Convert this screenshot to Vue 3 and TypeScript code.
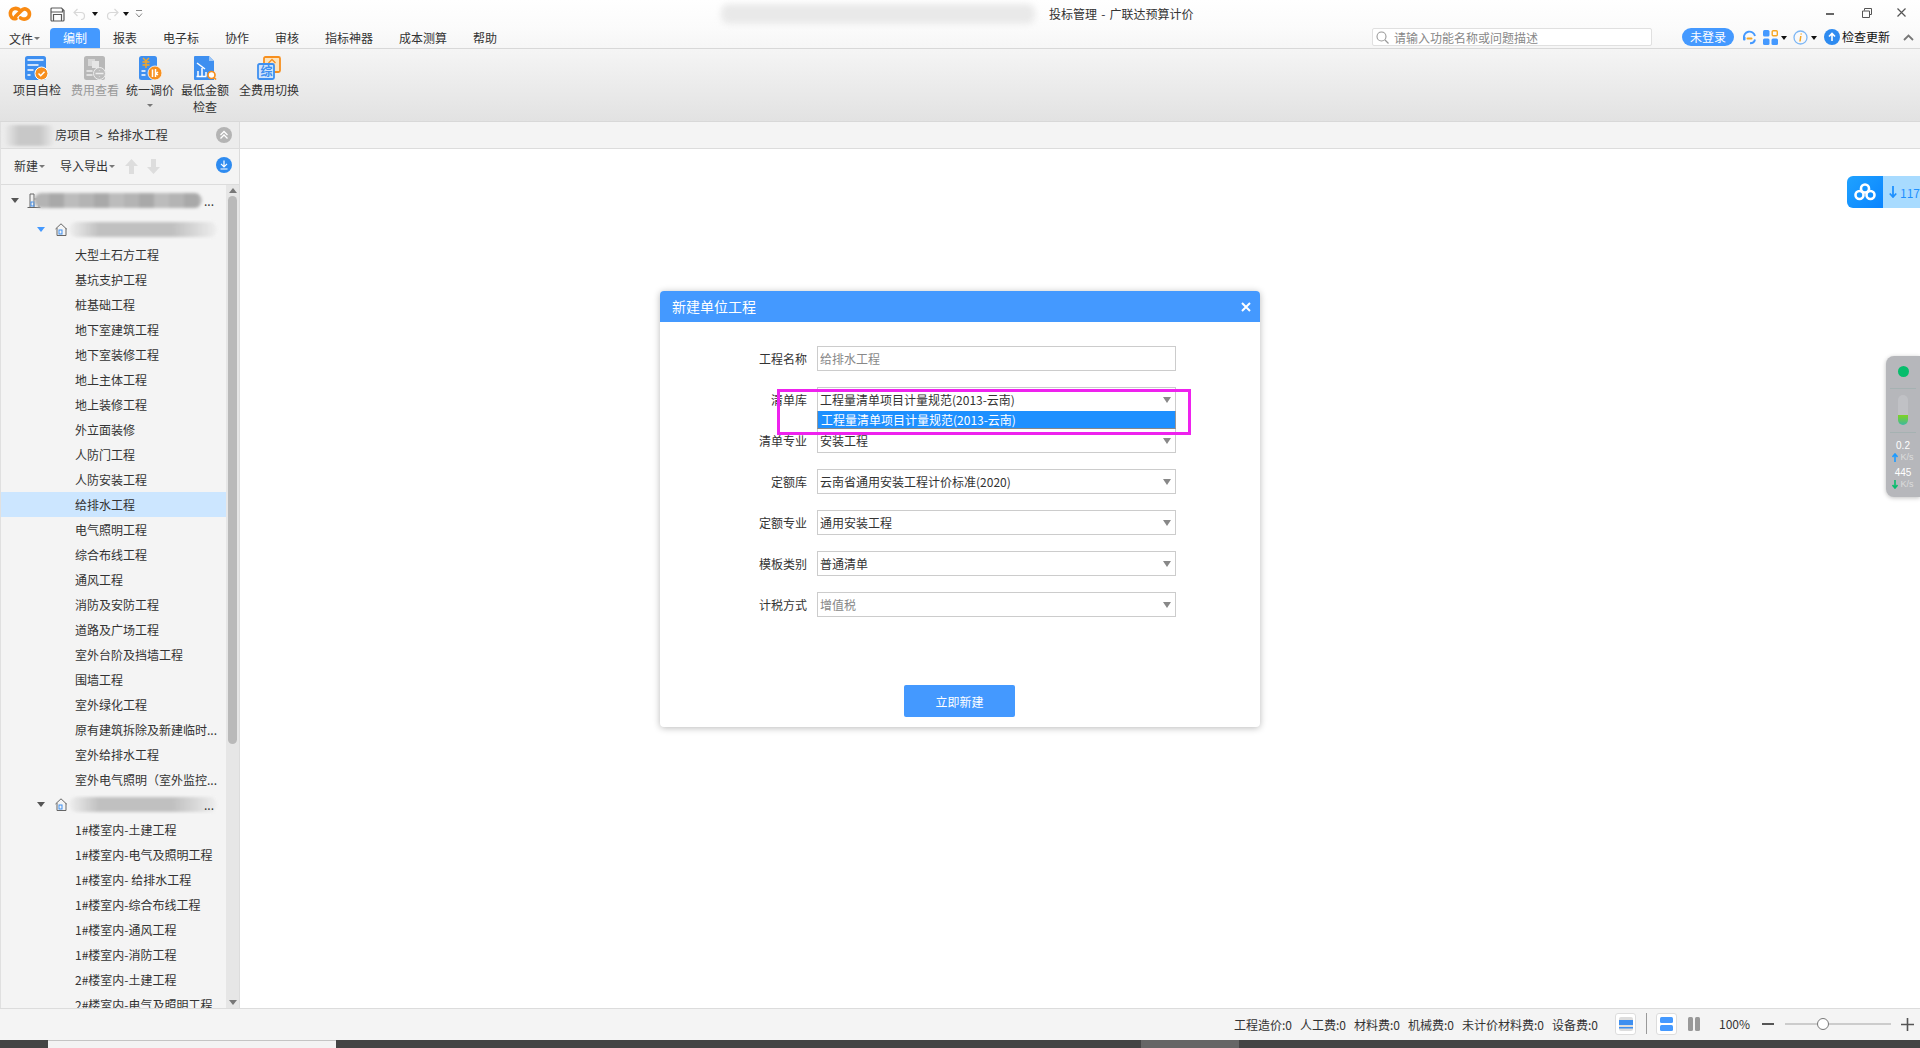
<script setup lang="ts">
interface TreeRow { text: string; kind: 'leaf' | 'group'; selected?: boolean }
const tabs: string[] = ['报表', '电子标', '协作', '审核', '指标神器', '成本测算', '帮助']
const leaves: string[] = ['大型土石方工程','基坑支护工程','桩基础工程','地下室建筑工程','地下室装修工程','地上主体工程','地上装修工程','外立面装修','人防门工程','人防安装工程','给排水工程','电气照明工程','综合布线工程','通风工程','消防及安防工程','道路及广场工程','室外台阶及挡墙工程','围墙工程','室外绿化工程','原有建筑拆除及新建临时...','室外给排水工程','室外电气照明（室外监控...']
const leaves2: string[] = ['1#楼室内-土建工程','1#楼室内-电气及照明工程','1#楼室内- 给排水工程','1#楼室内-综合布线工程','1#楼室内-通风工程','1#楼室内-消防工程','2#楼室内-土建工程','2#楼室内-电气及照明工程']
const rows: TreeRow[] = [
  ...leaves.map((text) => ({ text, kind: 'leaf' as const, selected: text === '给排水工程' })),
  { text: '', kind: 'group' as const },
  ...leaves2.map((text) => ({ text, kind: 'leaf' as const })),
]
const form = [
  { label: '工程名称', value: '给排水工程', select: false, muted: true },
  { label: '清单库', value: '工程量清单项目计量规范(2013-云南)', select: true, muted: false },
  { label: '清单专业', value: '安装工程', select: true, muted: false },
  { label: '定额库', value: '云南省通用安装工程计价标准(2020)', select: true, muted: false },
  { label: '定额专业', value: '通用安装工程', select: true, muted: false },
  { label: '模板类别', value: '普通清单', select: true, muted: false },
  { label: '计税方式', value: '增值税', select: true, muted: true },
]
const costs: string[] = ['工程造价:0', '人工费:0', '材料费:0', '机械费:0', '未计价材料费:0', '设备费:0']
</script>

<template>
  <div class="app">
    <header class="titlebar">
      <div class="quick">
        <svg class="logo" width="24" height="18" viewBox="0 0 24 18"><path d="M11 4.500C8.500 2.500 3 3 2.300 8 2 12 5 14.500 8 13.500M7.500 11.500 14 5C17 2.500 21.500 5 21.500 9 21.500 13.500 16.500 15.500 12.500 13" fill="none" stroke="#f98a12" stroke-width="3.600" stroke-linecap="round"/></svg>
        <svg class="save" width="15" height="15" viewBox="0 0 15 15"><path d="M2 1h9.500L14 3.500V13a1 1 0 0 1-1 1H2a1 1 0 0 1-1-1V2a1 1 0 0 1 1-1zM1.500 5h11V2M3.500 14V7.500h8V14" fill="none" stroke="#5a5a5a" stroke-width="1.200"/></svg>
        <svg class="undo" width="13" height="12" viewBox="0 0 13 12"><path d="M4.500 1 1 4.500 4.500 8M1 4.500h7a3.500 3.500 0 0 1 0 7" fill="none" stroke="#d8d8d8" stroke-width="1.200"/></svg>
        <i class="caret dark q1"></i>
        <svg class="redo" width="13" height="12" viewBox="0 0 13 12"><path d="M8.500 1 12 4.500 8.500 8M12 4.500H5a3.500 3.500 0 0 0 0 7" fill="none" stroke="#d8d8d8" stroke-width="1.200"/></svg>
        <i class="caret dark q2"></i>
        <svg class="more" width="8" height="9" viewBox="0 0 8 9"><path d="M1 .5h6M1 3.500 4 7l3-3.500" fill="none" stroke="#888" stroke-width="1"/></svg>
      </div>
      <div class="smudge title-smudge"></div>
      <div class="app-title">投标管理 - 广联达预算计价</div>
      <div class="win">
        <i class="win-min"></i>
        <svg width="10" height="10" viewBox="0 0 10 10"><path d="M2.500 2.500V.5h7V6.500H7.500M.5 3h7v6.500h-7z" fill="none" stroke="#555" stroke-width="1"/></svg>
        <svg width="9" height="9" viewBox="0 0 9 9"><path d="M.5.500l8 8M8.500.5l-8 8" stroke="#555" stroke-width="1.200"/></svg>
      </div>
    </header>

    <nav class="menubar">
      <div class="file">文件<i class="caret gray"></i></div>
      <div class="tab active">编制</div>
      <div v-for="t in tabs" :key="t" class="tab">{{ t }}</div>
      <div class="menu-right">
        <div class="search">
          <svg width="13" height="13" viewBox="0 0 13 13"><circle cx="5.500" cy="5.500" r="4.500" fill="none" stroke="#999" stroke-width="1.100"/><path d="M9 9l3.500 3.500" stroke="#999" stroke-width="1.200"/></svg>
          <span>请输入功能名称或问题描述</span>
        </div>
        <div class="pill">未登录</div>
        <svg class="headset" width="15" height="15" viewBox="0 0 15 15"><path d="M2 8.500A5.500 5.500 0 0 1 13 6M13 9.500c-.5 2.500-2.500 3.800-5 3.800" fill="none" stroke="#4499ff" stroke-width="1.900"/><rect x="1" y="6.500" width="2.500" height="4" rx="1" fill="#4499ff"/><rect x="4.500" y="7.500" width="6" height="2" rx="1" fill="#f6a623"/></svg>
        <svg class="grid" width="15" height="15" viewBox="0 0 15 15"><rect width="6.500" height="6.500" rx="1.500" fill="#4499ff"/><rect x="9.200" y=".7" width="5.100" height="5.100" rx="1" fill="none" stroke="#f6a623" stroke-width="1.400"/><rect y="8.500" width="6.500" height="6.500" rx="1.500" fill="#4499ff"/><rect x="8.500" y="8.500" width="6.500" height="6.500" rx="1.500" fill="#4499ff"/></svg>
        <i class="caret dark c1"></i>
        <svg class="info" width="15" height="15" viewBox="0 0 15 15"><circle cx="7.500" cy="7.500" r="6.500" fill="none" stroke="#7db7f5" stroke-width="1.300"/><path d="M8.200 3.500v1M7.800 6 7 11.500" stroke="#f6a623" stroke-width="1.500"/></svg>
        <i class="caret dark c2"></i>
        <svg class="update" width="16" height="16" viewBox="0 0 16 16"><circle cx="8" cy="8" r="8" fill="#2e8bf0"/><path d="M8 12V5M5 7.500 8 4.500l3 3" fill="none" stroke="#fff" stroke-width="1.600"/></svg>
        <span class="update-text">检查更新</span>
        <svg class="fold" width="11" height="7" viewBox="0 0 11 7"><path d="M1 6 5.500 1.500 10 6" fill="none" stroke="#777" stroke-width="1.800"/></svg>
      </div>
    </nav>

    <section class="ribbon">
      <div class="rb b1">
        <svg width="24" height="24" viewBox="0 0 24 24"><rect x="0" width="21" height="24" rx="2.500" fill="#3e8ff0"/><path d="M2.500 4h16M2.500 9h11M2.500 14h6M2.500 19h3" stroke="#fff" stroke-width="1.600"/><circle cx="16.500" cy="17.500" r="6.500" fill="#f78f1e" stroke="#fff" stroke-width="1"/><path d="M13.500 17.500l2.200 2.200 3.800-4" fill="none" stroke="#fff" stroke-width="1.500"/></svg>
        <span>项目自检</span>
      </div>
      <div class="rb b2 disabled">
        <svg width="24" height="24" viewBox="0 0 24 24"><rect x="1" width="21" height="24" rx="2.500" fill="#b8b8b8"/><rect x="5" y="3" width="7" height="7" fill="#d8d8d8"/><rect x="9" y="5" width="7" height="7" fill="#e6e6e6"/><path d="M3.500 15h6M3.500 19h6" stroke="#eee" stroke-width="1.600"/><circle cx="16.500" cy="17.500" r="6" fill="#bdbdbd" stroke="#eee" stroke-width="1"/><path d="M12.500 17.500h8M16.500 14.500v.5M16.500 20v.5" stroke="#eee" stroke-width="1.300"/></svg>
        <span>费用查看</span>
      </div>
      <div class="rb b3">
        <svg width="24" height="24" viewBox="0 0 24 24"><rect x="1" width="18" height="24" rx="2.500" fill="#3e8ff0"/><path d="M5 2l3 3 3-3M4.500 6h7M4.500 9h7M8 5v7" fill="none" stroke="#f6a623" stroke-width="1.400"/><path d="M3.500 15h4M3.500 19h4" stroke="#fff" stroke-width="1.500"/><circle cx="17" cy="17" r="7" fill="#f78f1e"/><circle cx="17" cy="17" r="7" fill="none" stroke="#fff" stroke-width=".8"/><path d="M14.500 13.500V21M17.500 13v8M20 16l-2 1.500 2 1.500" fill="none" stroke="#fff" stroke-width="1.500"/></svg>
        <span>统一调价</span>
        <i class="caret gray under"></i>
      </div>
      <div class="rb b4">
        <svg width="24" height="24" viewBox="0 0 24 24"><path d="M2 0h14l5 5v19H2a1 1 0 0 1-1-1V1a1 1 0 0 1 1-1z" fill="#3e8ff0"/><path d="M16 0v5h5z" fill="#9cc6f7"/><path d="M4 7l8 6M5 20V15M9 20V12M13 20v-4M3.500 20.500h10" fill="none" stroke="#fff" stroke-width="1.500"/><circle cx="18.500" cy="19" r="3.500" fill="#fff" stroke="#f78f1e" stroke-width="1.700"/><path d="M21 21.500l2 2" stroke="#f78f1e" stroke-width="1.700"/></svg>
        <span>最低金额<br />检查</span>
      </div>
      <div class="rb b5">
        <svg width="24" height="24" viewBox="0 0 24 24"><rect x="7" y="1" width="16" height="15" rx="1.500" fill="#fde4bd" stroke="#f78f1e" stroke-width="1.800"/><path d="M11.500 7 15 3.500 18.500 7M13 9h4M13 12h4" fill="none" stroke="#f78f1e" stroke-width="1.300"/><rect x="1" y="8" width="16" height="15" rx="1.500" fill="#cfe4fb" stroke="#3e8ff0" stroke-width="1.800"/><text x="3.500" y="20" class="icon-char">综</text></svg>
        <span>全费用切换</span>
      </div>
    </section>

    <div class="body">
      <aside class="side">
        <div class="crumb">
          <div class="smudge crumb-smudge"></div>
          <span>房项目</span><span class="sep">&gt;</span><span>给排水工程</span>
          <svg class="crumb-btn" width="16" height="16" viewBox="0 0 16 16"><circle cx="8" cy="8" r="8" fill="#b4b4b4"/><path d="M4.500 8 8 4.500 11.500 8M4.500 11.500 8 8l3.500 3.500" fill="none" stroke="#fff" stroke-width="1.300"/></svg>
        </div>
        <div class="tools">
          <span>新建</span><i class="caret gray"></i>
          <span class="gap">导入导出</span><i class="caret gray"></i>
          <svg class="up" width="13" height="15" viewBox="0 0 13 15"><path d="M6.500 0 13 7H9v8H4V7H0z" fill="#ddd"/></svg>
          <svg class="down" width="13" height="15" viewBox="0 0 13 15"><path d="M6.500 15 13 8H9V0H4v8H0z" fill="#ddd"/></svg>
          <svg class="dl" width="16" height="16" viewBox="0 0 16 16"><circle cx="8" cy="8" r="8" fill="#2e8bf0"/><path d="M8 3.500v6M5 6.800l3 3 3-3M4.500 12h7" fill="none" stroke="#fff" stroke-width="1.200"/></svg>
        </div>
        <div class="tree-wrap">
          <div class="tree">
            <div class="row top">
              <i class="tri"></i>
              <svg class="bld" width="14" height="15" viewBox="0 0 14 15"><path d="M3 14.500V1h4v13.500M.5 14.500h13M7 6h5v8.500" fill="none" stroke="#666"/><rect x="4" y="9" width="3" height="4" fill="none" stroke="#3e8ff0"/></svg>
              <div class="smudge top-smudge"></div>
              <span class="dots">...</span>
            </div>
            <div class="row sub">
              <i class="tri blue"></i>
              <svg class="home" width="13" height="13" viewBox="0 0 13 13"><path d="M.5 6 6 .8 11.500 6M2 5v7.500h9V5" fill="none" stroke="#666"/><rect x="4" y="7" width="3" height="4" fill="none" stroke="#3e8ff0"/></svg>
              <div class="smudge sub-smudge"></div>
            </div>
            <template v-for="(r, i) in rows" :key="i">
              <div v-if="r.kind === 'leaf'" class="row leaf" :class="{ selected: r.selected }">{{ r.text }}</div>
              <div v-else class="row sub">
                <i class="tri"></i>
                <svg class="home" width="13" height="13" viewBox="0 0 13 13"><path d="M.5 6 6 .8 11.500 6M2 5v7.500h9V5" fill="none" stroke="#666"/><rect x="4" y="7" width="3" height="4" fill="none" stroke="#3e8ff0"/></svg>
                <div class="smudge sub-smudge"></div>
                <span class="dots">...</span>
              </div>
            </template>
          </div>
          <div class="scroll">
            <i class="sc-up"></i>
            <div class="thumb"></div>
            <div class="sc-fill"></div>
            <i class="sc-down"></i>
          </div>
        </div>
      </aside>
      <main class="main">
        <div class="main-band"></div>
      </main>
    </div>

    <footer class="status">
      <span v-for="c in costs" :key="c" class="cost">{{ c }}</span>
      <div class="st-btn first">
        <svg width="14" height="14" viewBox="0 0 14 14"><rect width="14" height="14" rx="2" fill="#ddd"/><rect y="3" width="14" height="5" fill="#3e8ff0"/><rect y="10" width="14" height="1.500" fill="#3e8ff0"/></svg>
      </div>
      <i class="st-div"></i>
      <div class="st-btn">
        <svg width="13" height="14" viewBox="0 0 13 14"><rect width="13" height="6" rx="1.500" fill="#4499ff"/><rect y="8" width="13" height="6" rx="1.500" fill="#4499ff"/></svg>
      </div>
      <svg class="cols" width="12" height="14" viewBox="0 0 12 14"><rect width="5" height="14" rx="1.500" fill="#999"/><rect x="7" width="5" height="14" rx="1.500" fill="#999"/></svg>
      <span class="pct">100%</span>
      <i class="minus"></i>
      <div class="slider"><i class="handle"></i></div>
      <svg class="plus" width="13" height="13" viewBox="0 0 13 13"><path d="M0 6.500h13M6.500 0v13" stroke="#555" stroke-width="1.600"/></svg>
    </footer>

    <div class="taskbar">
      <div class="task-light"></div>
      <div class="task-mid"></div>
      <div class="task-gray"></div>
      <div class="task-fill"></div>
    </div>

    <div class="cloud">
      <div class="cloud-icon">
        <svg width="22" height="18" viewBox="0 0 22 18"><g fill="none" stroke="#fff" stroke-width="2.600"><circle cx="11" cy="5.500" r="4"/><circle cx="5.500" cy="12" r="4"/><circle cx="16.500" cy="12" r="4"/></g></svg>
      </div>
      <div class="cloud-text">
        <svg width="8" height="12" viewBox="0 0 8 12"><path d="M4 0v11M.8 7.500 4 11l3.200-3.500" fill="none" stroke="#1e90ff" stroke-width="1.800"/></svg>
        <span>117</span>
      </div>
    </div>

    <div class="meter">
      <i class="dot"></i>
      <i class="m-line"></i>
      <div class="capsule"><i></i></div>
      <i class="m-line"></i>
      <b>0.2</b>
      <div class="rate"><svg width="6" height="9" viewBox="0 0 6 9"><path d="M3 9V2M.5 4 3 1l2.500 3" fill="none" stroke="#1e9bff" stroke-width="1.600"/></svg><span>K/s</span></div>
      <b class="second">445</b>
      <div class="rate"><svg width="6" height="9" viewBox="0 0 6 9"><path d="M3 0v7M.5 5 3 8l2.500-3" fill="none" stroke="#07bd6c" stroke-width="1.600"/></svg><span>K/s</span></div>
    </div>

    <div class="dialog">
      <div class="dlg-head">
        <span>新建单位工程</span>
        <svg width="10" height="10" viewBox="0 0 10 10"><path d="M1 1l8 8M9 1 1 9" stroke="#fff" stroke-width="2"/></svg>
      </div>
      <div class="dlg-form">
        <div v-for="f in form" :key="f.label" class="f-row">
          <label>{{ f.label }}</label>
          <div class="f-input" :class="{ muted: f.muted }">
            <span>{{ f.value }}</span>
            <i v-if="f.select" class="f-arrow"></i>
          </div>
        </div>
      </div>
      <button class="create" type="button">立即新建</button>
      <div class="option">工程量清单项目计量规范(2013-云南)</div>
      <div class="mark"></div>
    </div>
  </div>
</template>

<style>
html, body { margin: 0; overflow: hidden; background: #fff; }
</style>

<style scoped>
.app { width: 1920px; height: 1048px; position: relative; overflow: hidden; display: flex; flex-direction: column; font: 12px/17px "Noto Sans CJK SC", "Noto Sans", sans-serif; color: #333; background: #fff; }
i { display: block; font-style: normal; }
.caret { width: 0; height: 0; border-left: 3px solid transparent; border-right: 3px solid transparent; border-top: 3px solid #555; }
.caret.dark { border-top-color: #111; border-top-width: 4px; }
.caret.gray { border-top-color: #777; }
.icon-char { font-size: 12px; font-weight: 700; fill: #3e8ff0; font-family: "Noto Sans CJK SC", sans-serif; }
.smudge { background: repeating-linear-gradient(90deg, #b4b4b4 0 15px, #a9a9a9 15px 30px, #bcbcbc 30px 45px); filter: blur(1.500px); border-radius: 8px; }

.titlebar { height: 28px; flex: none; display: flex; align-items: center; position: relative; background: linear-gradient(#fff, #fbfbfb); }
.quick { display: flex; align-items: center; padding-left: 8px; }
.logo { margin-right: 18px; }
.save { margin-right: 8px; }
.undo { margin-right: 6px; }
.q1 { margin-right: 8px; }
.redo { margin-right: 4px; }
.q2 { margin-right: 6px; }
.title-smudge { position: absolute; left: 721px; top: 4px; width: 314px; height: 20px; background: #e9e9e9; filter: blur(3px); }
.app-title { position: absolute; left: 1049px; top: 5px; white-space: pre; word-spacing: 1.500px; }
.win { margin-left: auto; display: flex; align-items: center; padding: 0 14px 3px 0; gap: 25px; }
.win-min { width: 8px; height: 2px; background: #666; margin: 3px 3px 0 0; }

.menubar { height: 21px; flex: none; display: flex; align-items: flex-end; background: linear-gradient(#fbfbfb, #f6f6f6); border-bottom: 1px solid #d8d8d8; padding-left: 9px; box-sizing: border-box; }
.file { width: 41px; height: 20px; display: flex; align-items: center; gap: 1px; flex: none; }
.tab { height: 20px; padding: 0 13px; line-height: 20px; flex: none; }
.tab.active { background: #4499ff; color: #fff; border-radius: 4px 4px 0 0; }
.menu-right { margin-left: auto; display: flex; align-items: center; height: 20px; position: relative; width: 548px; flex: none; }
.search { position: absolute; left: 0; top: 0; width: 275px; height: 16px; border: 1px solid #e0e0e0; border-radius: 2px; background: #fff; display: flex; align-items: center; color: #888; gap: 5px; padding-left: 3px; box-sizing: content-box; }
.pill { position: absolute; left: 310px; top: 0; width: 52px; height: 18px; line-height: 18px; border-radius: 9px; background: #4499ff; color: #fff; text-align: center; }
.headset { position: absolute; left: 370px; top: 2px; }
.grid { position: absolute; left: 391px; top: 2px; }
.c1 { position: absolute; left: 409px; top: 8px; }
.info { position: absolute; left: 421px; top: 2px; }
.c2 { position: absolute; left: 439px; top: 8px; }
.update { position: absolute; left: 452px; top: 1px; }
.update-text { position: absolute; left: 470px; top: 0; color: #111; }
.fold { position: absolute; left: 531px; top: 6px; }

.ribbon { height: 73px; flex: none; display: flex; align-items: flex-start; padding: 7px 0 0 13px; box-sizing: border-box; background: linear-gradient(#f5f5f5, #e2e2e2); border-bottom: 1px solid #d8d8d8; }
.rb { display: flex; flex-direction: column; align-items: center; text-align: center; gap: 1px; position: relative; }
.rb span { display: block; }
.b1, .b4 { margin-right: 10px; }
.b2, .b3 { margin-right: 7px; }
.rb.disabled { color: #999; }
.under { margin-top: 5px; }

.body { flex: 1; min-height: 0; display: flex; }
.side { width: 240px; flex: none; display: flex; flex-direction: column; background: #f4f4f4; border-right: 1px solid #dcdcdc; border-left: 1px solid #e0e0e0; box-sizing: border-box; }
.crumb { height: 27px; flex: none; display: flex; align-items: center; padding: 0 0 1px 54px; background: #ececec; border-bottom: 1px solid #dcdcdc; box-sizing: border-box; position: relative; }
.crumb-smudge { position: absolute; left: 2px; top: 3px; width: 53px; height: 21px; background: linear-gradient(90deg, #eee, #c8c8c8 30%, #c8c8c8 70%, #eee); }
.sep { margin: 0 5px; }
.crumb-btn { position: absolute; left: 215px; top: 5px; }
.tools { height: 36px; flex: none; display: flex; align-items: center; padding: 0 0 2px 13px; position: relative; background: #f4f4f4; border-bottom: 1px solid #dcdcdc; box-sizing: border-box; }
.tools .caret { margin: 2px 0 0 1px; }
.gap { margin-left: 15px; }
.up { position: absolute; left: 124px; top: 10px; }
.down { position: absolute; left: 146px; top: 10px; }
.dl { position: absolute; left: 215px; top: 8px; }
.tree-wrap { flex: 1; min-height: 0; display: flex; overflow: hidden; }
.tree { width: 225px; flex: none; padding-top: 3px; overflow: hidden; }
.row { height: 25px; line-height: 25px; position: relative; box-sizing: border-box; white-space: nowrap; flex: none; }
.row.top { margin-bottom: 4px; }
.leaf { padding-left: 74px; }
.selected { background: #cce6ff; }
.tri { position: absolute; width: 0; height: 0; border-left: 4px solid transparent; border-right: 4px solid transparent; border-top: 5px solid #555; top: 10px; }
.tri.blue { border-top-color: #4499ff; }
.top .tri { left: 10px; }
.sub .tri { left: 36px; }
.bld { position: absolute; left: 26px; top: 5px; }
.home { position: absolute; left: 54px; top: 6px; }
.top-smudge { position: absolute; left: 33px; top: 5px; width: 168px; height: 15px; }
.sub-smudge { position: absolute; left: 68px; top: 5px; width: 148px; height: 15px; opacity: .85; background: linear-gradient(90deg, #eee, #b8b8b8 20%, #b8b8b8 70%, #eee); }
.dots { position: absolute; left: 203px; top: 0; }
.scroll { width: 13px; flex: none; background: #e6e6e6; display: flex; flex-direction: column; align-items: center; }
.sc-up { width: 0; height: 0; border: 4px solid transparent; border-top: 0; border-bottom: 5px solid #777; margin: 3px 0; flex: none; }
.thumb { width: 9px; height: 548px; flex: none; background: #b9b9b9; border-radius: 5px; }
.sc-fill { flex: 1; }
.sc-down { width: 0; height: 0; border: 4px solid transparent; border-bottom: 0; border-top: 5px solid #777; margin: 0 0 3px; flex: none; }
.main { flex: 1; min-width: 0; background: #fff; }
.main-band { height: 27px; background: #f4f4f4; border-bottom: 1px solid #dcdcdc; box-sizing: border-box; }

.status { height: 32px; flex: none; display: flex; align-items: center; background: #f4f4f4; border-top: 1px solid #dcdcdc; box-sizing: border-box; padding: 0 0 1px 1234px; position: relative; }
.cost { margin-right: 8px; white-space: nowrap; }
.st-btn { width: 21px; height: 22px; border: 1px solid #ddd; border-radius: 3px; background: #fff; box-sizing: border-box; display: flex; align-items: center; justify-content: center; position: absolute; left: 1656px; top: 4px; }
.st-btn.first { left: 1615px; }
.st-div { position: absolute; left: 1646px; top: 4px; width: 1px; height: 21px; background: #999; }
.cols { position: absolute; left: 1688px; top: 8px; }
.pct { position: absolute; left: 1719px; top: 6px; }
.minus { position: absolute; left: 1762px; top: 14px; width: 12px; height: 2px; background: #555; }
.slider { position: absolute; left: 1785px; top: 14px; width: 106px; height: 2px; background: #ccc; }
.handle { position: absolute; left: 32px; top: -5px; width: 12px; height: 12px; border-radius: 50%; background: #fff; border: 1px solid #777; box-sizing: border-box; }
.plus { position: absolute; left: 1901px; top: 9px; }

.taskbar { height: 8px; flex: none; display: flex; background: #444; }
.task-light { width: 288px; margin-left: 48px; background: #f3f3f3; border-top: 1px solid #c4c4c4; box-sizing: border-box; }
.task-mid { width: 805px; }
.task-gray { width: 98px; background: #666; }
.task-fill { flex: 1; }

.cloud { position: absolute; left: 1847px; top: 176px; width: 73px; height: 32px; display: flex; border-radius: 6px 0 0 6px; overflow: hidden; }
.cloud-icon { width: 36px; background: linear-gradient(135deg, #1fa2ff, #0a84ff); display: flex; align-items: center; justify-content: center; }
.cloud-text { flex: 1; background: #a8dbff; color: #1e90ff; display: flex; align-items: center; gap: 3px; padding-left: 6px; white-space: nowrap; }
.meter { position: absolute; left: 1886px; top: 356px; width: 34px; height: 141px; box-sizing: border-box; padding-top: 10px; background: #b6b7bb; border-radius: 8px 0 0 8px; display: flex; flex-direction: column; align-items: center; color: #fff; font-family: "Liberation Sans", sans-serif; box-shadow: 0 1px 4px rgba(0,0,0,.25); }
.dot { width: 11px; height: 11px; border-radius: 50%; background: #07bd6c; margin-left: 1px; flex: none; }
.m-line { width: 26px; height: 1px; background: #a5b2b2; margin: 11px 0 6px; flex: none; }
.capsule { width: 10px; height: 30px; border-radius: 5px; background: #c0c1c5; position: relative; overflow: hidden; flex: none; }
.capsule i { position: absolute; left: 0; right: 0; bottom: 0; height: 10px; background: linear-gradient(#7ed321, #3fb8a0); }
.capsule + .m-line { margin: 7px 0; }
.meter b { font-weight: 400; font-size: 10px; line-height: 12px; flex: none; }
.meter b.second { margin-top: 5px; }
.rate { font-size: 9px; line-height: 10px; color: #ddd; display: flex; align-items: center; gap: 2px; flex: none; }

.dialog { position: absolute; left: 660px; top: 291px; width: 600px; height: 436px; background: #fff; border-radius: 4px; box-shadow: 0 1px 7px rgba(0,0,0,.28); display: flex; flex-direction: column; align-items: center; }
.dlg-head { height: 31px; width: 100%; flex: none; background: #4499ff; color: #fff; font-size: 14px; display: flex; align-items: center; justify-content: space-between; padding: 0 9px 0 12px; box-sizing: border-box; border-radius: 4px 4px 0 0; }
.dlg-form { width: 100%; padding-top: 24px; display: flex; flex-direction: column; gap: 16px; flex: none; }
.f-row { height: 25px; display: flex; align-items: center; }
.f-row label { width: 147px; text-align: right; margin: 0 10px 1px 0; flex: none; }
.f-input { width: 359px; height: 25px; border: 1px solid #ccc; box-sizing: border-box; display: flex; align-items: center; justify-content: space-between; padding: 0 3px 1px 2px; background: #fff; }
.f-input.muted { color: #888; }
.f-arrow { width: 0; height: 0; border-left: 4px solid transparent; border-right: 4px solid transparent; border-top: 6px solid #888; margin: 1px 1px 0 0; }
.create { margin: 68px 1px 0 0; width: 111px; height: 32px; border: 0; background: #4499ff; color: #fff; border-radius: 2px; font: inherit; flex: none; }
.option { position: absolute; left: 157px; top: 120px; width: 359px; height: 18px; line-height: 18px; box-sizing: border-box; background: #1e90ff; color: #fff; padding-left: 3px; border-bottom: 1px solid #888; border-left: 1px solid #999; border-right: 1px solid #999; }
.mark { position: absolute; left: 117px; top: 98px; width: 414px; height: 46px; box-sizing: border-box; border: 3px solid #ee22ee; }
</style>
